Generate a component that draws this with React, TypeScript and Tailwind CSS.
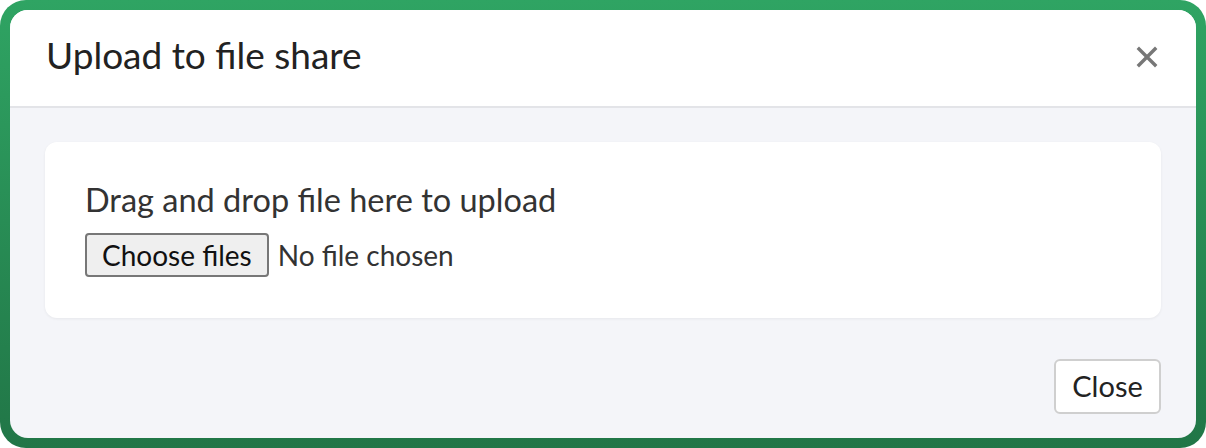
import React from 'react';

export default function App() {
  return (
    <div className="w-[1206px] h-[448px] rounded-[26px] bg-gradient-to-b from-[#2fa463] to-[#217647] p-[10px] font-['Lato','Open_Sans',sans-serif]">
      <div className="flex h-full flex-col overflow-hidden rounded-[18px] bg-[#f4f5f9]">
        {/* 헤더 */}
        <div className="flex h-[98px] items-center justify-between border-b-2 border-[#e3e4e8] bg-white pb-[6px] pl-[36px] pr-[38px]">
          <h1 className="text-[37px] font-normal leading-[44px] text-[#222]">Upload to file share</h1>
          <button className="mt-[4px] text-[#777]" aria-label="close">
            <svg width="22" height="22" viewBox="0 0 22 22">
              <path d="M3 3 L19 19 M19 3 L3 19" stroke="currentColor" strokeWidth="3.4" strokeLinecap="square" />
            </svg>
          </button>
        </div>

        {/* 본문 */}
        <div className="flex flex-1 flex-col px-[35px] pt-[34px] pb-[24px]">
          <div className="flex h-[176px] flex-col rounded-[12px] bg-white pl-[40px] pt-[38px] shadow-[0_1px_3px_rgba(0,0,0,0.06)]">
            <p className="text-[32.5px] leading-[40px] text-[#333]">Drag and drop file here to upload</p>
            <div className="mt-[13px] flex items-center gap-[9px]">
              <span className="flex h-[44px] items-center rounded-[4px] border-2 border-[#777] bg-[#efefef] px-[15px] text-[28px] text-[#111]">
                Choose files
              </span>
              <span className="text-[28px] text-[#333]">No file chosen</span>
            </div>
          </div>

          <div className="mt-auto flex justify-end">
            <button className="h-[55px] w-[107px] rounded-[6px] border-2 border-[#cfcfcf] bg-white pb-[2px] text-[29px] text-[#222]">
              Close
            </button>
          </div>
        </div>
      </div>
    </div>
  );
}
